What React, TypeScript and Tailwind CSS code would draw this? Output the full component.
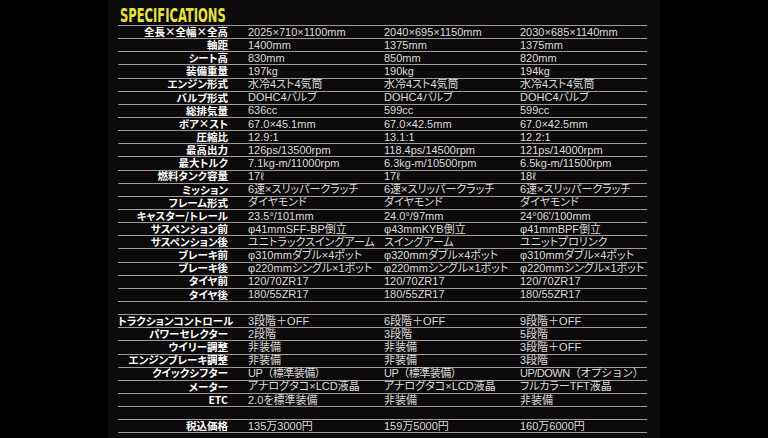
const rows: (string[] | null)[] = [
  ["全長×全幅×全高", "2025×710×1100mm", "2040×695×1150mm", "2030×685×1140mm"],
  ["軸距", "1400mm", "1375mm", "1375mm"],
  ["シート高", "830mm", "850mm", "820mm"],
  ["装備重量", "197kg", "190kg", "194kg"],
  ["エンジン形式", "水冷4スト4気筒", "水冷4スト4気筒", "水冷4スト4気筒"],
  ["バルブ形式", "DOHC4バルブ", "DOHC4バルブ", "DOHC4バルブ"],
  ["総排気量", "636cc", "599cc", "599cc"],
  ["ボア×スト", "67.0×45.1mm", "67.0×42.5mm", "67.0×42.5mm"],
  ["圧縮比", "12.9:1", "13.1:1", "12.2:1"],
  ["最高出力", "126ps/13500rpm", "118.4ps/14500rpm", "121ps/14000rpm"],
  ["最大トルク", "7.1kg-m/11000rpm", "6.3kg-m/10500rpm", "6.5kg-m/11500rpm"],
  ["燃料タンク容量", "17ℓ", "17ℓ", "18ℓ"],
  ["ミッション", "6速×スリッパークラッチ", "6速×スリッパークラッチ", "6速×スリッパークラッチ"],
  ["フレーム形式", "ダイヤモンド", "ダイヤモンド", "ダイヤモンド"],
  ["キャスター/トレール", "23.5°/101mm", "24.0°/97mm", "24°06'/100mm"],
  ["サスペンション前", "φ41mmSFF-BP倒立", "φ43mmKYB倒立", "φ41mmBPF倒立"],
  ["サスペンション後", "ユニトラックスイングアーム", "スイングアーム", "ユニットプロリンク"],
  ["ブレーキ前", "φ310mmダブル×4ポット", "φ320mmダブル×4ポット", "φ310mmダブル×4ポット"],
  ["ブレーキ後", "φ220mmシングル×1ポット", "φ220mmシングル×1ポット", "φ220mmシングル×1ポット"],
  ["タイヤ前", "120/70ZR17", "120/70ZR17", "120/70ZR17"],
  ["タイヤ後", "180/55ZR17", "180/55ZR17", "180/55ZR17"],
  null,
  ["トラクションコントロール", "3段階＋OFF", "6段階＋OFF", "9段階＋OFF"],
  ["パワーセレクター", "2段階", "3段階", "5段階"],
  ["ウイリー調整", "非装備", "非装備", "3段階＋OFF"],
  ["エンジンブレーキ調整", "非装備", "非装備", "3段階"],
  ["クイックシフター", "UP（標準装備）", "UP（標準装備）", "UP/DOWN（オプション）"],
  ["メーター", "アナログタコ×LCD液晶", "アナログタコ×LCD液晶", "フルカラーTFT液晶"],
  ["ETC", "2.0を標準装備", "非装備", "非装備"],
  null,
  ["税込価格", "135万3000円", "159万5000円", "160万6000円"],
];

// full-width brackets keep their width in the print, so no palt there
const valueClass = (v: string) =>
  v.includes("（")
    ? "text-[11px] text-[#dcdcdc] tracking-[-0.5px] font-['Liberation_Sans','Noto_Sans_CJK_JP',sans-serif]"
    : "text-[11px] text-[#dcdcdc] [font-feature-settings:'palt'] font-['Liberation_Sans','Noto_Sans_CJK_JP',sans-serif]";

export default function App() {
  return (
    <div className="w-[768px] h-[438px] bg-black flex justify-center overflow-hidden">
      <div className="w-[552px] h-full bg-[#0c0a0a] pl-[10px]">
        <div className="h-[25px] pt-[4px] pl-[2px]">
          <h1 className="inline-block origin-left scale-x-[0.64] text-[20px] leading-none font-bold text-[#e6e23c] font-['DejaVu_Sans_Condensed','DejaVu_Sans',sans-serif]">
            SPECIFICATIONS
          </h1>
        </div>
        <div className="w-[529px] border-t border-[#9c9c9c]">
          {rows.map((row, i) => (
            <div
              key={i}
              className="grid grid-cols-[130px_136px_136px_1fr] h-[13.15px] border-b border-[#9c9c9c] items-center leading-none whitespace-nowrap"
            >
              {row && (
                <>
                  <div className="pr-[20px] text-right text-[10.5px] font-bold text-white [font-feature-settings:'palt'] font-['Noto_Sans_CJK_JP',sans-serif] -translate-y-[0.5px]">
                    {row[0]}
                  </div>
                  {row.slice(1).map((v, j) => (
                    <div key={j} className={valueClass(v)}>
                      {v}
                    </div>
                  ))}
                </>
              )}
            </div>
          ))}
        </div>
      </div>
    </div>
  );
}
